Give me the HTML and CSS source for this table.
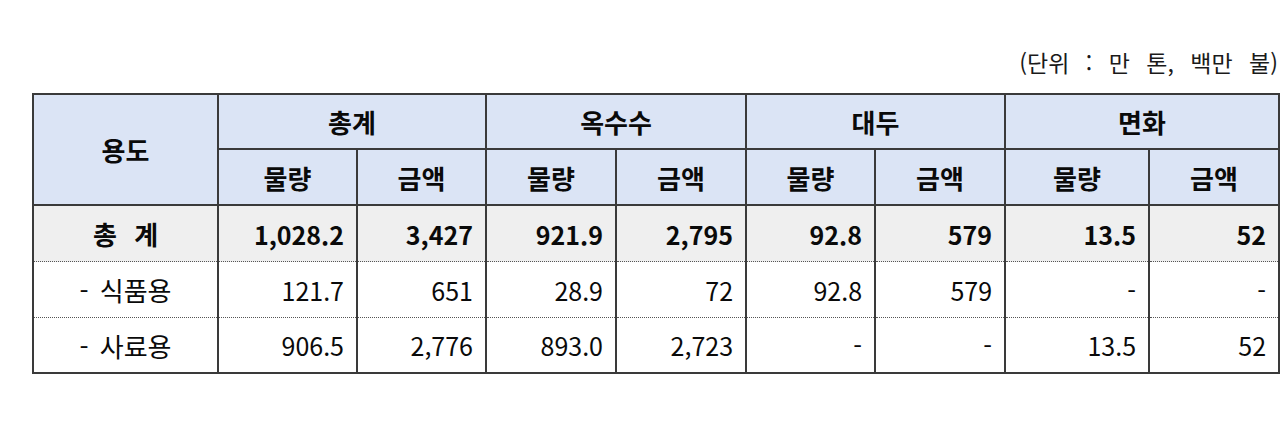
FILE: index.html
```html
<!DOCTYPE html>
<html lang="ko">
<head>
<meta charset="utf-8">
<link rel="stylesheet" href="styles.css">
</head>
<body>
<div class="page">
  <div class="unit">(단위 : 만 톤, 백만 불)</div>
  <table class="tbl">
    <colgroup>
      <col class="c0"><col class="c1"><col class="c2"><col class="c3"><col class="c4"><col class="c5"><col class="c6"><col class="c7"><col class="c8">
    </colgroup>
    <thead>
      <tr class="h1">
        <th rowspan="2">용도</th>
        <th colspan="2">총계</th>
        <th colspan="2">옥수수</th>
        <th colspan="2">대두</th>
        <th colspan="2">면화</th>
      </tr>
      <tr class="h2">
        <th>물량</th><th>금액</th>
        <th>물량</th><th>금액</th>
        <th>물량</th><th>금액</th>
        <th>물량</th><th>금액</th>
      </tr>
    </thead>
    <tbody>
      <tr class="total">
        <td class="lbl">총 계</td>
        <td>1,028.2</td><td>3,427</td>
        <td>921.9</td><td>2,795</td>
        <td>92.8</td><td>579</td>
        <td>13.5</td><td>52</td>
      </tr>
      <tr class="r1">
        <td class="lbl">- 식품용</td>
        <td>121.7</td><td>651</td>
        <td>28.9</td><td>72</td>
        <td>92.8</td><td>579</td>
        <td>-</td><td>-</td>
      </tr>
      <tr class="r2">
        <td class="lbl">- 사료용</td>
        <td>906.5</td><td>2,776</td>
        <td>893.0</td><td>2,723</td>
        <td>-</td><td>-</td>
        <td>13.5</td><td>52</td>
      </tr>
    </tbody>
  </table>
</div>
</body>
</html>
```
FILE: styles.css
```css
html, body {
  margin: 0;
  padding: 0;
  background: #ffffff;
}
body {
  font-family: "Noto Sans CJK KR", "Noto Sans", sans-serif;
  color: #0a0a0a;
}
.page {
  width: 1246px;
  padding: 44px 0 0 32px;
}
.unit {
  text-align: right;
  font-size: 23px;
  line-height: 36px;
  height: 49px;
  word-spacing: 10px;
  color: #1a1a1a;
}
.tbl {
  width: 1246px;
  border-collapse: collapse;
  table-layout: fixed;
  border: 2px solid #3a3a3a;
}
.c0 { width: 185px; }
.c1 { width: 139px; }
.c2 { width: 129px; }
.c3 { width: 130px; }
.c4 { width: 130px; }
.c5 { width: 129px; }
.c6 { width: 130px; }
.c7 { width: 144px; }
.c8 { width: 130px; }
.tbl th {
  background: #dbe4f5;
  font-weight: 700;
  font-size: 26px;
  border: 2px solid #3a3a3a;
  padding: 0;
  text-align: center;
  vertical-align: middle;
}
.h1 th { height: 53px; }
.h2 th { height: 54px; }
.tbl td {
  font-size: 25px;
  height: 55px;
  padding: 0 12px 0 0;
  text-align: right;
  vertical-align: middle;
  border-left: 2px solid #3a3a3a;
  border-right: 2px solid #3a3a3a;
  border-bottom: 1px dotted #555;
}
.tbl tr.r2 td {
  height: 54px;
  border-bottom: 2px solid #3a3a3a;
}
.tbl td.lbl {
  text-align: center;
  padding: 0;
  font-size: 26px;
  word-spacing: 4px;
}
.total td {
  background: #efefef;
  font-weight: 700;
}
.total td.lbl { word-spacing: 10px; }
```
